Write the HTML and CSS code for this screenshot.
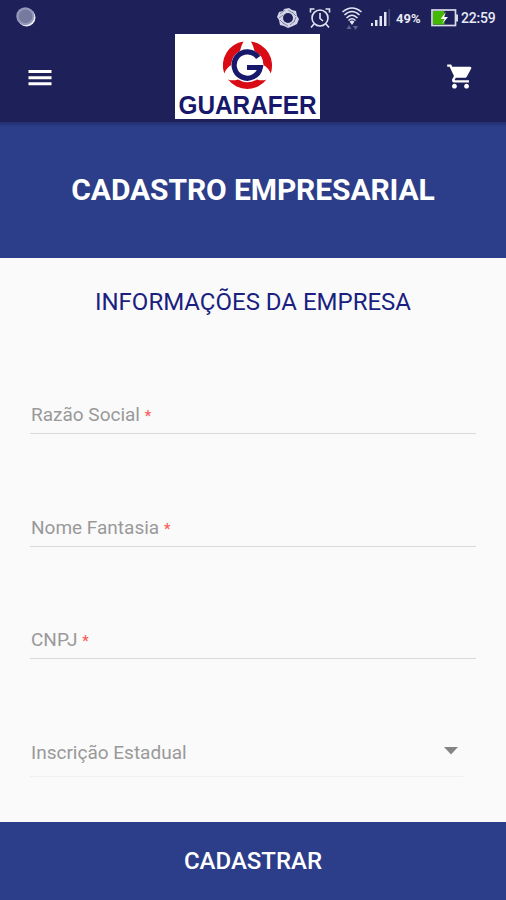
FILE: index.html
```html
<!DOCTYPE html>
<html lang="pt-BR">
<head>
  <meta charset="UTF-8">
  <meta name="viewport" content="width=device-width, initial-scale=1.0">
  <title>Guarafer - Cadastro Empresarial</title>
  <link rel="stylesheet" href="styles.css">
</head>
<body>
  <div class="app">
    <div class="status-bar">
      <svg class="status-dot" width="20" height="20" viewBox="0 0 20 20">
        <circle cx="10.5" cy="10.5" r="9" fill="#f0f1fa"/>
        <circle cx="9.3" cy="9.2" r="9" fill="#9498b8"/>
        <circle cx="9.5" cy="9.2" r="6.8" fill="#757a9f"/>
      </svg>
      <div class="status-icons">
        <svg class="icon-ring" width="24" height="22" viewBox="0 0 24 22">
          <path d="M8 2l5-1 3 2 4 1 1 5 2 3-2 5-4 2-5 2-4-2-4-1-1-5-2-3 2-5 4-1z" fill="#d3d5e7"/>
          <path d="M4 7l5-4M3 11l4-3M12 3l5 3M16 5l4 4M20 10l-2 5M19 14l-5 4M12 19l-5-3M8 17l-4-4" fill="none" stroke="#6d709b" stroke-width=".8"/>
          <circle cx="12" cy="11" r="5" fill="#1e2059"/>
        </svg>
        <svg class="icon-alarm" width="22" height="22" viewBox="0 0 22 22" fill="none" stroke="#e4e5f2" stroke-width="1.6">
          <circle cx="11" cy="11" r="8"/>
          <path d="M11 6v5.500l3 2.500M1.500 5.500V2h4M20.500 5.500V2h-4M5 17l-3 3.500M17 17l3 3.500"/>
        </svg>
        <svg class="icon-wifi" width="22" height="24" viewBox="0 0 22 24" fill="none" stroke="#e4e5f2" stroke-width="1.5">
          <path d="M1.500 6Q11 -2 20.500 6M3.500 9Q11 2 18.500 9M5.500 12Q11 6.500 16.500 12M7.500 14.500Q11 11 14.500 14.500"/>
          <path d="M8.500 15.500Q11 13.500 13.500 15.500L11 19z" fill="#e4e5f2" stroke="none"/>
          <path d="M5.500 23l2.500-4 2.500 4zM12 20h5l-2.500 4z" fill="#60638c" stroke="none"/>
        </svg>
        <svg class="icon-signal" width="20" height="20" viewBox="0 0 20 20" fill="#e4e5f2">
          <rect x="0" y="15" width="2" height="3"/>
          <rect x="4" y="12" width="2.500" height="6"/>
          <rect x="8.500" y="8" width="2.500" height="10"/>
          <rect x="13" y="4" width="2.500" height="14"/>
          <rect x="17.500" y="1" width="1.500" height="17" fill="#484b79"/>
        </svg>
        <span class="percent">49%</span>
        <svg class="icon-battery" width="27" height="18" viewBox="0 0 27 18">
          <rect x="1" y="1" width="23.500" height="15.500" fill="none" stroke="#dadbe9" stroke-width="1.700"/>
          <rect x="2" y="2" width="11.500" height="13.500" fill="#43b800"/>
          <rect x="25" y="5.500" width="2" height="7" fill="#dadbe9"/>
          <path d="M15 3l-5.500 7h4L11 15l6-7h-4z" fill="#fff"/>
        </svg>
        <span class="clock">22:59</span>
      </div>
    </div>

    <div class="toolbar">
      <svg class="menu" width="24" height="18" viewBox="0 0 24 18" fill="#fff">
        <path d="M.500 1h23v3h-23zM.500 7.200h23v3h-23zM.500 13.300h23v3h-23z"/>
      </svg>
      <svg class="logo" width="145" height="85" viewBox="0 0 145 85">
        <rect width="145" height="85" fill="#fff"/>
        <path d="M68.500 7.500A24.300 24.300 0 0 0 49.200 39.500Q51 34.500 56.200 31Q57 21 65 17Q66 12 68.500 7.500z" fill="#d90b14"/>
        <path d="M76 7.500A24.300 24.300 0 0 1 95.700 39.500Q94 34.500 88.500 31Q88 21 79.500 17Q78.500 12 76 7.500z" fill="#d90b14"/>
        <path d="M53 45.500Q58 47.200 63 45.500Q72.300 51 82 45.500Q87 47.200 91.500 45.500A24.300 24.300 0 0 1 53 45.500z" fill="#d90b14"/>
        <circle cx="72.300" cy="31.500" r="16" fill="#fff"/>
        <path d="M83.200 23.500A13.200 13.200 0 1 0 85.300 33.500H72" fill="none" stroke="#17176b" stroke-width="5.200"/>
        <text class="logo-text" x="3.500" y="79.500" textLength="138" lengthAdjust="spacingAndGlyphs">GUARAFER</text>
      </svg>
      <svg class="cart" width="29" height="29" viewBox="0 0 24 24" fill="#fff">
        <path d="M7 18c-1.100 0-1.990.9-1.990 2S5.900 22 7 22s2-.9 2-2-.9-2-2-2zM1 2v2h2l3.600 7.590-1.350 2.450c-.16.280-.25.610-.25.960 0 1.100.9 2 2 2h12v-2H7.420c-.14 0-.25-.11-.25-.25l.03-.12.900-1.630h7.450c.75 0 1.410-.41 1.750-1.030l3.580-6.490A1 1 0 0 0 20 4H5.210l-.94-2H1zm16 16c-1.100 0-1.990.9-1.990 2s.89 2 1.990 2 2-.9 2-2-.9-2-2-2z"/>
      </svg>
    </div>

    <div class="hero">
      <h1>CADASTRO EMPRESARIAL</h1>
    </div>

    <div class="content">
      <h2>INFORMAÇÕES DA EMPRESA</h2>
      <div class="field">Razão Social <span class="required">*</span></div>
      <div class="field">Nome Fantasia <span class="required">*</span></div>
      <div class="field">CNPJ <span class="required">*</span></div>
      <div class="field select">
        <span>Inscrição Estadual</span>
        <svg class="arrow" width="14" height="8" viewBox="0 0 14 8"><path d="M0 0h14L7 7.500z" fill="#858585"/></svg>
      </div>
    </div>

    <button class="submit">CADASTRAR</button>
  </div>
</body>
</html>
```

FILE: styles.css
```css
* {
  box-sizing: border-box;
}

body {
  margin: 0;
  font-family: Roboto, sans-serif;
  background-color: #fafafa;
}

.app {
  display: flex;
  flex-direction: column;
  height: 900px;
  overflow: hidden;
}

.status-bar {
  display: flex;
  justify-content: space-between;
  height: 34px;
  padding: 7px 10px 0 16px;
  background-color: #1e2059;
  color: #e8e9f4;
}

.status-icons {
  display: flex;
  align-items: center;
  height: 22px;
}

.icon-alarm {
  margin-left: 9px;
}

.icon-wifi {
  margin-left: 10px;
}

.icon-signal {
  margin-left: 8px;
}

.percent {
  width: 26px;
  margin-left: 5px;
  font-size: 13px;
  font-weight: 700;
}

.icon-battery {
  margin-left: 9px;
}

.clock {
  width: 35px;
  margin-left: 3px;
  font-size: 14px;
  font-weight: 500;
  letter-spacing: -0.2px;
}

.toolbar {
  display: grid;
  grid-template-columns: 1fr 145px 1fr;
  height: 88px;
  background-color: #1e2059;
}

.menu {
  margin: 35px 0 0 28px;
}

.cart {
  justify-self: end;
  margin: 28px 31px 0 0;
}

.logo {
  margin-left: -6px;
  overflow: visible;
}

.logo-text {
  font-family: "Liberation Sans", Arial, sans-serif;
  font-size: 25px;
  font-weight: 700;
  fill: #17176b;
}

.hero {
  height: 136px;
  padding-top: 50px;
  background-color: #2c3e89;
  background-image: linear-gradient(#24306f, #2c3e89 5px);
  text-align: center;
}

h1 {
  margin: 0;
  color: #fff;
  font-size: 30px;
  font-weight: 700;
  line-height: 36px;
  letter-spacing: -0.1px;
}

.content {
  flex: 1;
  padding: 30px 30px 0;
}

h2 {
  margin: 0 0 89px;
  color: #1a1f80;
  font-size: 24px;
  font-weight: 400;
  line-height: 28px;
  text-align: center;
}

.field {
  height: 29px;
  margin-bottom: 83.5px;
  border-bottom: 1px solid #dadada;
  padding-left: 1px;
  color: #999;
  font-size: 19px;
  line-height: 19px;
}

.required {
  color: #f8605e;
  font-size: 14px;
  font-weight: 700;
}

.select {
  display: flex;
  justify-content: space-between;
  height: 34px;
  margin: 0 13px 0 0;
  padding-right: 5px;
  border-bottom-color: #f0f0f0;
}

.arrow {
  margin-top: 4px;
}

.submit {
  height: 78px;
  border: none;
  padding: 0;
  background-color: #2c3e89;
  color: #fff;
  font-family: inherit;
  font-size: 24px;
  font-weight: 500;
}
```
